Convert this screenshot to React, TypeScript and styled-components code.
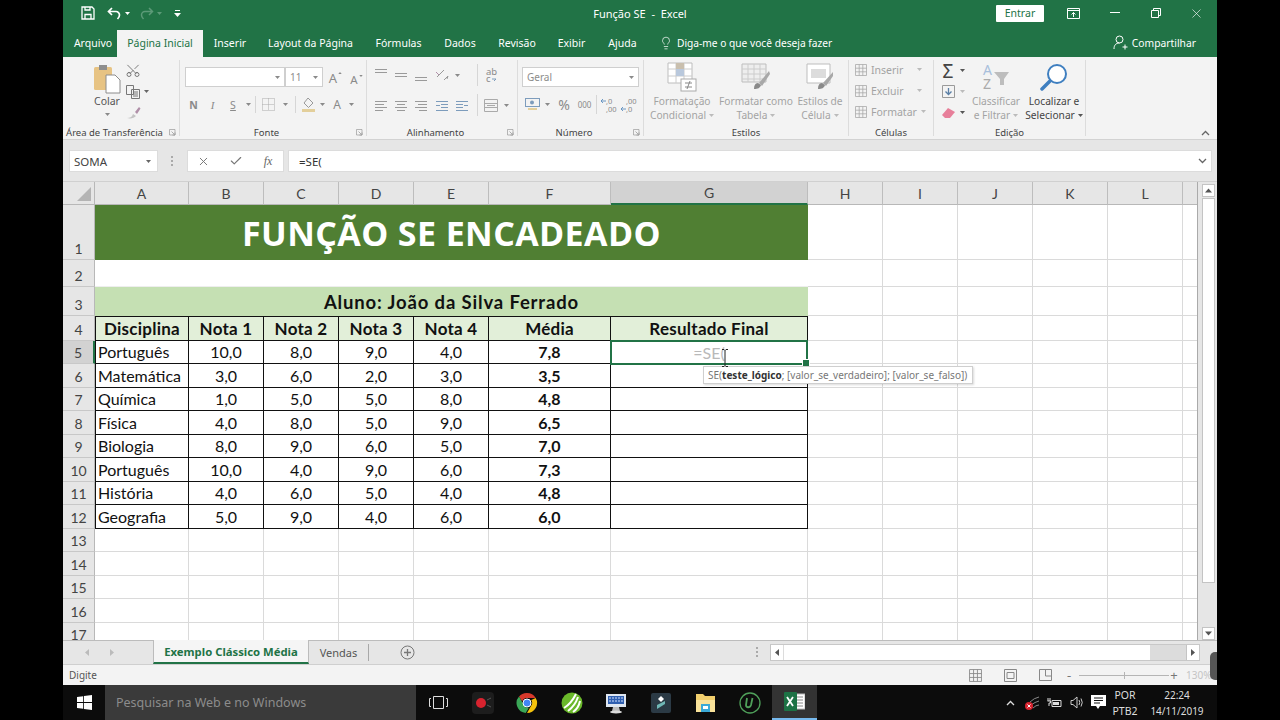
import React from 'react';
import styled, { createGlobalStyle } from 'styled-components';
import { Check, Lightbulb, Scissors, X } from 'lucide-react';

const Global = createGlobalStyle`
  html, body { margin: 0; padding: 0; background: #000; }
  * { box-sizing: border-box; }
`;

const UI = '"Noto Sans", "Open Sans", sans-serif';
const SHEET = 'Lato, "Noto Sans", sans-serif';
const GREEN = '#217346';
const DIM = '#a3a3a3';

const Page = styled.div`
  width: 1280px;
  height: 720px;
  padding: 0 63px;
  background: #000;
  overflow: hidden;
  font-family: ${UI};
`;
const Win = styled.div`
  width: 1154px;
  height: 720px;
  display: flex;
  flex-direction: column;
`;

/* title bar */
const TitleBar = styled.div`
  height: 29px;
  padding-bottom: 3px;
  background: ${GREEN};
  display: grid;
  grid-template-columns: 1fr auto 1fr;
  align-items: center;
  color: #fff;
  font-size: 11px;
`;
const Qat = styled.div`
  display: flex;
  align-items: center;
  padding-left: 18px;
`;
const Gap = styled.span<{ $w: number }>`
  width: ${(p) => p.$w}px;
  flex: none;
`;
const WinBtns = styled.div`
  display: flex;
  align-items: center;
  justify-content: flex-end;
`;
const Entrar = styled.div`
  width: 48px;
  height: 17px;
  margin-right: 9px;
  background: #fff;
  color: ${GREEN};
  border-radius: 1px;
  display: flex;
  align-items: center;
  justify-content: center;
  font-size: 10.5px;
`;
const WinBtn = styled.span`
  width: 41px;
  display: flex;
  justify-content: center;
`;

/* tabs */
const TabBar = styled.div`
  height: 28px;
  background: ${GREEN};
  display: flex;
  align-items: stretch;
  padding-left: 6px;
  padding-top: 1px;
  color: #fff;
  font-size: 10.5px;
`;
const Tab = styled.div<{ $active?: boolean; $w: number }>`
  width: ${(p) => p.$w}px;
  padding-bottom: 2px;
  display: flex;
  align-items: center;
  justify-content: center;
  flex: none;
  background: ${(p) => (p.$active ? '#f3f3f3' : 'transparent')};
  color: ${(p) => (p.$active ? GREEN : '#fff')};
`;
const Tell = styled.div`
  margin-left: 10px;
  padding-bottom: 2px;
  display: flex;
  align-items: center;
  gap: 4px;
  font-size: 10.2px;
`;
const Share = styled.div`
  margin-left: auto;
  padding: 0 21px 2px 0;
  display: flex;
  align-items: center;
  gap: 4px;
  font-size: 10.3px;
`;

/* ribbon */
const Ribbon = styled.div`
  height: 83px;
  background: #f3f3f3;
  border-bottom: 1px solid #d2d2d2;
  display: flex;
  padding-top: 3px;
  position: relative;
`;
const Group = styled.section<{ $w: number }>`
  width: ${(p) => p.$w}px;
  height: 76px;
  flex: none;
  border-right: 1px solid #dcdcdc;
  display: flex;
  flex-direction: column;
`;
const GroupBody = styled.div<{ $pad?: number }>`
  flex: 1;
  display: flex;
  min-height: 0;
  padding-left: ${(p) => p.$pad ?? 0}px;
`;
const GroupLabel = styled.div<{ $launch?: boolean }>`
  height: 14px;
  flex: none;
  margin-bottom: -3px;
  display: grid;
  grid-template-columns: ${(p) => (p.$launch ? '1fr auto 1fr 13px' : '1fr auto 1fr')};
  align-items: center;
  font-size: 9.5px;
  color: #444;
  white-space: nowrap;
`;
const Launcher = styled.span`
  justify-self: end;
  margin-right: 3px;
  display: flex;
`;
const Column = styled.div<{ $top?: number }>`
  margin-top: ${(p) => p.$top ?? 0}px;
  display: flex;
  flex-direction: column;
`;
const Row = styled.div<{ $h?: number; $gap?: number; $end?: boolean }>`
  height: ${(p) => p.$h ?? 21}px;
  margin-top: ${(p) => p.$gap ?? 0}px;
  display: flex;
  align-items: ${(p) => (p.$end ? 'flex-end' : 'center')};
  flex: none;
`;
const Slot = styled.span<{ $w: number; $c?: string; $size?: number; $bold?: boolean; $serif?: boolean; $under?: boolean }>`
  width: ${(p) => p.$w}px;
  flex: none;
  display: flex;
  justify-content: center;
  align-items: center;
  color: ${(p) => p.$c ?? '#8a8a8a'};
  font-size: ${(p) => p.$size ?? 11}px;
  font-weight: ${(p) => (p.$bold ? 700 : 400)};
  ${(p) => (p.$serif ? 'font-family: "Liberation Serif", serif; font-style: italic;' : '')}
  ${(p) => (p.$under ? 'text-decoration: underline;' : '')}
`;
const SupMark = styled.span`
  align-self: flex-start;
  margin: 3px 0 0 1px;
  display: flex;
`;
const Combo = styled.div<{ $w: number }>`
  width: ${(p) => p.$w}px;
  height: 20px;
  flex: none;
  background: #fff;
  border: 1px solid #cfcfcf;
  display: flex;
  align-items: center;
  justify-content: space-between;
  padding: 0 4px;
  font-size: 10px;
  color: #8c8c8c;
`;
const Divider = styled.span<{ $h?: number }>`
  width: 1px;
  height: ${(p) => p.$h ?? 17}px;
  background: #d6d6d6;
  flex: none;
`;
const PasteBtn = styled.div`
  width: 62px;
  flex: none;
  display: grid;
  align-content: start;
  justify-items: center;
  padding-left: 26px;
  font-size: 10.5px;
  line-height: 14px;
  color: #555;
`;
const PasteIcon = styled.div`
  height: 34px;
  display: flex;
  align-items: flex-end;
`;
const PasteTri = styled.span`
  display: flex;
  margin-top: 5px;
`;
const BigBtn = styled.div<{ $w: number; $c?: string; $ml?: number }>`
  width: ${(p) => p.$w}px;
  margin-left: ${(p) => p.$ml ?? 0}px;
  flex: none;
  display: flex;
  flex-direction: column;
  align-items: center;
  font-size: 10.2px;
  line-height: 14px;
  color: ${(p) => p.$c ?? DIM};
  white-space: nowrap;
`;
const BigLine = styled.span`
  display: flex;
  align-items: center;
  gap: 3px;
`;
const BigIcon = styled.div`
  height: 33px;
  display: flex;
  align-items: center;
  justify-content: center;
  margin-bottom: 1px;
`;
const CellBtn = styled.div`
  height: 21px;
  display: flex;
  align-items: center;
  gap: 4px;
  padding-left: 6px;
  color: ${DIM};
  font-size: 10.5px;
  white-space: nowrap;
`;
const CellText = styled.span<{ $w?: number }>`
  ${(p) => (p.$w ? `width: ${p.$w}px;` : '')}
`;
const Collapse = styled.span`
  position: absolute;
  right: 7px;
  bottom: 3px;
  display: flex;
`;

/* formula bar */
const FormulaBar = styled.div`
  height: 41px;
  padding: 1px 5px 0 6px;
  background: #e6e6e6;
  display: flex;
  align-items: center;
  font-size: 11.5px;
  color: #444;
`;
const NameBox = styled.div`
  width: 89px;
  height: 22px;
  background: #fff;
  display: flex;
  align-items: center;
  justify-content: space-between;
  padding: 0 6px 0 4px;
  border: 1px solid #dcdcdc;
`;
const Dots = styled.span`
  width: 29px;
  display: flex;
  justify-content: center;
`;
const FxBox = styled.div`
  width: 97px;
  height: 22px;
  background: #fff;
  border: 1px solid #dcdcdc;
  display: flex;
  align-items: center;
`;
const FormulaInput = styled.div`
  flex: 1;
  height: 22px;
  margin-left: 4px;
  background: #fff;
  border: 1px solid #dcdcdc;
  display: flex;
  align-items: center;
  justify-content: space-between;
  padding: 0 4px 0 10px;
  color: #333;
`;

/* sheet */
const SheetArea = styled.div`
  height: 459px;
  display: flex;
  background: #e6e6e6;
  border-top: 1px solid #d0d0d0;
`;
const Grid = styled.div`
  width: 1135px;
  height: 458px;
  overflow: hidden;
  flex: none;
  background: #fff;
  border-right: 1px solid #aaa;
  display: grid;
  grid-template-columns: 32px 94px 75px 75px 75px 75px 122px 197px 75px 75px 75px 75px 75px 15px;
  grid-template-rows: 23px 55px 27px 29px 24.5px repeat(13, 23.5px);
  font-family: ${SHEET};
`;
const Corner = styled.div`
  background: #e6e6e6;
  border-right: 1px solid #b8b8b8;
  border-bottom: 1px solid #b8b8b8;
  display: flex;
  align-items: flex-end;
  justify-content: flex-end;
  padding: 0 3px 3px 0;
`;
const ColHead = styled.div<{ $sel?: boolean }>`
  background: ${(p) => (p.$sel ? '#d2d2d2' : '#e6e6e6')};
  border-right: 1px solid #bdbdbd;
  border-bottom: ${(p) => (p.$sel ? `2px solid ${GREEN}` : '1px solid #b8b8b8')};
  display: flex;
  align-items: center;
  justify-content: center;
  font-size: 14px;
  color: #444;
`;
const RowHead = styled.div<{ $sel?: boolean }>`
  background: ${(p) => (p.$sel ? '#d2d2d2' : '#e6e6e6')};
  border-right: ${(p) => (p.$sel ? `2px solid ${GREEN}` : '1px solid #b8b8b8')};
  border-bottom: 1px solid #c8c8c8;
  display: flex;
  align-items: flex-end;
  justify-content: center;
  padding-bottom: 2px;
  font-size: 14px;
  color: #444;
`;
const Cell = styled.div`
  border-right: 1px solid #dadada;
  border-bottom: 1px solid #dadada;
`;
const Banner = styled.div`
  grid-column: 2 / 9;
  background: #507f33;
  color: #fff;
  font-family: "Open Sans", sans-serif;
  font-weight: 700;
  font-size: 34px;
  letter-spacing: 0.4px;
  display: flex;
  align-items: center;
  justify-content: center;
`;
const Blank = styled.div`
  grid-column: 2 / 9;
  border-bottom: 1px solid #eee;
`;
const Student = styled.div`
  grid-column: 2 / 9;
  background: #c5e0b3;
  color: #111;
  font-weight: 700;
  font-size: 18.5px;
  letter-spacing: 0.85px;
  display: flex;
  align-items: center;
  justify-content: center;
`;
const Box = styled.div<{ $left?: boolean; $head?: boolean; $bold?: boolean; $align?: string }>`
  background: ${(p) => (p.$head ? '#e2efd9' : '#fff')};
  border-right: 1px solid #111;
  border-bottom: 1px solid #111;
  ${(p) => (p.$left ? 'border-left: 1px solid #111;' : '')}
  ${(p) => (p.$head ? 'border-top: 1px solid #111; letter-spacing: 0.25px;' : '')}
  display: flex;
  align-items: center;
  justify-content: ${(p) => (p.$align === 'left' ? 'flex-start' : 'center')};
  padding-left: ${(p) => (p.$align === 'left' ? 2 : 0)}px;
  font-size: ${(p) => (p.$head ? 17 : 16)}px;
  font-weight: ${(p) => (p.$head || p.$bold ? 700 : 400)};
  color: #111;
  white-space: nowrap;
`;
const Active = styled.div`
  position: relative;
  z-index: 2;
  margin: -1px 0 -1px -1px;
  border: 2px solid ${GREEN};
  display: flex;
  align-items: center;
  justify-content: center;
  font-size: 16px;
  color: #b9b9b9;
  background: #fff;
  &::after {
    content: '';
    position: absolute;
    right: -4px;
    bottom: -4px;
    width: 6px;
    height: 6px;
    background: ${GREEN};
    border: 1px solid #fff;
  }
`;
const Tooltip = styled.div`
  position: absolute;
  left: 91px;
  top: 24px;
  height: 18px;
  width: 270px;
  padding-left: 4px;
  background: #fff;
  border: 1px solid #cfcfcf;
  box-shadow: 1px 1px 2px rgba(0, 0, 0, 0.15);
  font-family: ${UI};
  font-size: 10px;
  color: #777;
  display: flex;
  align-items: center;
  white-space: pre;
  z-index: 4;
  & b { color: #333; font-weight: 700; }
`;
const Caret = styled.span`
  position: absolute;
  left: 109px;
  top: 7px;
  display: flex;
  z-index: 5;
`;

const VScroll = styled.div`
  width: 19px;
  height: 458px;
  display: flex;
  flex-direction: column;
  align-items: flex-end;
  padding: 2px 2px 0 0;
`;
const ScrollBtn = styled.span<{ $end?: boolean }>`
  width: 13px;
  height: 13px;
  ${(p) => (p.$end ? 'margin-top: auto;' : '')}
  background: #fff;
  border: 1px solid #c4c4c4;
  display: flex;
  align-items: center;
  justify-content: center;
  flex: none;
`;
const VThumb = styled.span`
  width: 13px;
  height: 385px;
  margin-top: 1px;
  background: #fff;
  border: 1px solid #c4c4c4;
  flex: none;
`;

/* sheet tabs */
const SheetTabs = styled.div`
  height: 25px;
  background: #e6e6e6;
  border-top: 1px solid #bcbcbc;
  border-bottom: 1px solid #cfcfcf;
  display: flex;
  align-items: stretch;
  font-size: 11px;
  color: #555;
`;
const TabNav = styled.div`
  width: 90px;
  display: flex;
  align-items: center;
  padding-left: 22px;
  gap: 21px;
`;
const SheetTab = styled.div`
  width: 156px;
  margin-top: -1px;
  background: #f5f5f5;
  border-left: 1px solid #bcbcbc;
  border-right: 1px solid #bcbcbc;
  border-bottom: 2px solid ${GREEN};
  color: ${GREEN};
  font-weight: 700;
  font-size: 11.3px;
  display: flex;
  align-items: center;
  justify-content: center;
`;
const SheetTab2 = styled.div`
  width: 60px;
  border-right: 1px solid #a8a8a8;
  margin: 3px 0;
  display: flex;
  align-items: center;
  justify-content: center;
`;
const AddSheet = styled.div`
  width: 76px;
  display: flex;
  align-items: center;
  justify-content: center;
`;
const TabDots = styled.div`
  margin-left: auto;
  width: 26px;
  display: flex;
  align-items: center;
  justify-content: center;
`;
const HScroll = styled.div`
  width: 430px;
  display: flex;
  align-items: center;
  background: #dcdcdc;
  margin: 3px 17px 3px 0;
  border: 1px solid #c8c8c8;
  border-left: none;
`;
const HBtn = styled.span<{ $end?: boolean }>`
  width: 13px;
  height: 100%;
  background: #fff;
  border-left: 1px solid #c4c4c4;
  ${(p) => (p.$end ? 'margin-left: auto;' : '')}
  display: flex;
  align-items: center;
  justify-content: center;
`;
const HThumb = styled.span`
  width: 366px;
  height: 100%;
  margin-left: 1px;
  background: #fff;
`;

/* status */
const StatusBar = styled.div`
  height: 20px;
  background: #f3f3f3;
  display: flex;
  align-items: center;
  padding-left: 6px;
  font-size: 10px;
  color: #555;
  position: relative;
`;
const StatusRight = styled.div`
  margin-left: auto;
  display: flex;
  align-items: center;
`;
const ZoomTrack = styled.span`
  width: 90px;
  height: 1px;
  background: #b5b5b5;
  margin-left: 3px;
  display: flex;
  justify-content: center;
  align-items: center;
  &::after {
    content: '';
    width: 1px;
    height: 7px;
    background: #b5b5b5;
  }
`;
const ZoomPct = styled.span`
  width: 38px;
  padding-left: 7px;
  font-size: 10px;
  color: #c4c4c4;
`;
const Blob = styled.span`
  position: absolute;
  right: 0;
  top: -13px;
  width: 7px;
  height: 28px;
  background: #555;
  border-radius: 5px 0 0 5px;
`;

/* taskbar */
const Taskbar = styled.div`
  height: 35px;
  background: #0c0c0c;
  display: flex;
  align-items: stretch;
  color: #ddd;
`;
const Start = styled.div`
  width: 42px;
  display: flex;
  align-items: center;
  justify-content: center;
`;
const Search = styled.div`
  width: 311px;
  background: #3a3a3a;
  color: #8c8c8c;
  font-size: 12.5px;
  display: flex;
  align-items: center;
  padding-left: 11px;
`;
const TaskIcon = styled.div<{ $on?: boolean }>`
  width: 44.5px;
  display: flex;
  align-items: center;
  justify-content: center;
  ${(p) => (p.$on ? 'background: #333; border-bottom: 2px solid #76b9ed;' : '')}
`;
const Tray = styled.div`
  margin-left: auto;
  display: flex;
  align-items: center;
`;
const TraySlot = styled.span<{ $w: number }>`
  width: ${(p) => p.$w}px;
  display: flex;
  justify-content: center;
  align-items: center;
`;
const Lang = styled.div`
  width: 36px;
  text-align: center;
  font-size: 10.5px;
  line-height: 16px;
`;
const Clock = styled.div`
  width: 68px;
  margin-right: 6px;
  text-align: center;
  font-size: 10px;
  line-height: 16px;
`;

const Tri = ({ c = '#8a8a8a', s = 5 }: { c?: string; s?: number }) => (
  <svg width={s} height={s - 2} viewBox="0 0 5 3"><path d="M0 0h5L2.5 3z" fill={c} /></svg>
);
const UpTri = ({ c = '#8a8a8a', s = 5 }: { c?: string; s?: number }) => (
  <svg width={s} height={s - 2} viewBox="0 0 5 3"><path d="M0 3h5L2.5 0z" fill={c} /></svg>
);
const Chevron = ({ d = 'down', c = '#666' }: { d?: 'down' | 'up'; c?: string }) => (
  <svg width="9" height="6" viewBox="0 0 9 6">
    <path d={d === 'down' ? 'M1 1l3.5 3.5L8 1' : 'M1 5l3.500-3.500L8 5'} fill="none" stroke={c} strokeWidth="1.3" />
  </svg>
);
const Corner5 = () => (
  <svg width="7" height="7" viewBox="0 0 7 7" fill="none" stroke="#999">
    <path d="M.5 .5h5.500v5.500H.5z" strokeWidth=".7" />
    <path d="M2.500 2.500l3 3M6 3.500V6H3.500" strokeWidth=".8" />
  </svg>
);
const Lines = ({ rows, c = '#9a9a9a' }: { rows: [number, number, number][]; c?: string }) => (
  <svg width="14" height="14" viewBox="0 0 14 14">
    {rows.map(([x, y, w], i) => <rect key={i} x={x} y={y} width={w} height="1" fill={c} />)}
  </svg>
);
const Sheetlet = ({ w = 12, c = '#aaa' }: { w?: number; c?: string }) => (
  <svg width={w} height={w} viewBox="0 0 12 12" fill="none" stroke={c} strokeWidth=".8">
    <path d="M.5 .5h11v11H.5zM.5 4.200h11M.5 7.800h11M4.200 .5v11M7.800 .5v11" />
  </svg>
);
const Grip = () => (
  <svg width="3" height="13" viewBox="0 0 3 13" fill="#aaa">
    <rect y="1" width="2" height="2" /><rect y="5" width="2" height="2" /><rect y="9" width="2" height="2" />
  </svg>
);
const Decimals = ({ top, bottom, low }: { top: string; bottom: string; low?: boolean }) => (
  <svg width="19" height="16" viewBox="0 0 19 16" overflow="visible" fontFamily="Noto Sans" fontSize="7.5" fill="#8a8a8a">
    <text x="6" y="7">{top}</text>
    <text x="6" y="15">{bottom}</text>
    <path d="M1 4h5M1 4l2-2M1 4l2 2" stroke="#5f8fbe" fill="none" strokeWidth=".9" transform={low ? 'translate(0 8)' : undefined} />
  </svg>
);

const columns = ['A', 'B', 'C', 'D', 'E', 'F', 'G', 'H', 'I', 'J', 'K', 'L', ''];
const headers = ['Disciplina', 'Nota 1', 'Nota 2', 'Nota 3', 'Nota 4', 'Média', 'Resultado Final'];
const grades = [
  ['Português', '10,0', '8,0', '9,0', '4,0', '7,8'],
  ['Matemática', '3,0', '6,0', '2,0', '3,0', '3,5'],
  ['Química', '1,0', '5,0', '5,0', '8,0', '4,8'],
  ['Física', '4,0', '8,0', '5,0', '9,0', '6,5'],
  ['Biologia', '8,0', '9,0', '6,0', '5,0', '7,0'],
  ['Português', '10,0', '4,0', '9,0', '6,0', '7,3'],
  ['História', '4,0', '6,0', '5,0', '4,0', '4,8'],
  ['Geografia', '5,0', '9,0', '4,0', '6,0', '6,0'],
];

const emptyRight = (row: number) => [0, 1, 2, 3, 4, 5].map((i) => <Cell key={`${row}-${i}`} />);

function Sheet() {
  return (
    <Grid>
      <Corner>
        <svg width="14" height="14" viewBox="0 0 14 14"><path d="M14 0v14H0z" fill="#b4b4b4" /></svg>
      </Corner>
      {columns.map((c, i) => <ColHead key={i} $sel={c === 'G'}>{c}</ColHead>)}

      <RowHead>1</RowHead>
      <Banner>FUNÇÃO SE ENCADEADO</Banner>
      {emptyRight(1)}
      <RowHead>2</RowHead>
      <Blank />
      {emptyRight(2)}
      <RowHead>3</RowHead>
      <Student>Aluno: João da Silva Ferrado</Student>
      {emptyRight(3)}

      <RowHead>4</RowHead>
      {headers.map((h, i) => <Box key={h} $head $left={i === 0}>{h}</Box>)}
      {emptyRight(4)}

      {grades.map((g, r) => (
        <React.Fragment key={r}>
          <RowHead $sel={r === 0}>{r + 5}</RowHead>
          {g.map((v, i) => (
            <Box key={i} $left={i === 0} $align={i === 0 ? 'left' : undefined} $bold={i === 5}>{v}</Box>
          ))}
          {r === 0 ? (
            <Active>
              =SE(
              <Tooltip>SE(<b>teste_lógico</b>; [valor_se_verdadeiro]; [valor_se_falso])</Tooltip>
              <Caret>
                <svg width="8" height="18" viewBox="0 0 8 18" fill="none" stroke="#222" strokeWidth="1">
                  <path d="M1 .5h2l1 1 1-1h2M4 1.500v15M1 17.500h2l1-1 1 1h2" />
                </svg>
              </Caret>
            </Active>
          ) : <Box />}
          {emptyRight(r + 5)}
        </React.Fragment>
      ))}

      {[13, 14, 15, 16, 17].map((n) => (
        <React.Fragment key={n}>
          <RowHead>{n}</RowHead>
          {[0, 1, 2, 3, 4, 5, 6].map((i) => <Cell key={i} />)}
          {emptyRight(n)}
        </React.Fragment>
      ))}
    </Grid>
  );
}

export default function App() {
  return (
    <Page>
      <Global />
      <Win>
        <TitleBar>
          <Qat>
            <svg width="14" height="14" viewBox="0 0 14 14" fill="none" stroke="#fff" strokeWidth="1.3">
              <path d="M1 1h10l2 2v10H1zM4 13V8.500h6V13M4 1v3h5V1" />
            </svg>
            <Gap $w={12} />
            <svg width="16" height="13" viewBox="0 0 16 13" fill="none" stroke="#fff" strokeWidth="1.7">
              <path d="M5 1L1.500 4.500 5 8M2 4.500h7a3.500 3.500 0 0 1 3.500 3.500c0 2-1 3-2 4" />
            </svg>
            <Gap $w={2} />
            <Tri c="#fff" />
            <Gap $w={9} />
            <svg width="15" height="13" viewBox="0 0 15 13" fill="none" stroke="#5c9a78" strokeWidth="1.5">
              <path d="M10 1l3.500 3.500L10 8M13 4.500H6A3.500 3.500 0 0 0 2.500 8c0 2 1 3 2 4" />
            </svg>
            <Gap $w={3} />
            <Tri c="#5c9a78" />
            <Gap $w={12} />
            <svg width="7" height="7" viewBox="0 0 7 7" fill="#fff"><path d="M1 0h5v1H1zM0 3h7L3.500 7z" /></svg>
          </Qat>
          <span>Função SE&nbsp; -&nbsp; Excel</span>
          <WinBtns>
            <Entrar>Entrar</Entrar>
            <WinBtn>
              <svg width="13" height="11" viewBox="0 0 13 11" fill="none" stroke="#fff">
                <path d="M.5 .5h12v10H.5zM.5 2.500h12M6.500 9V4.500M4.500 6.500l2-2 2 2" />
              </svg>
            </WinBtn>
            <WinBtn>
              <svg width="10" height="2" viewBox="0 0 10 2"><path d="M0 .5h10" stroke="#fff" /></svg>
            </WinBtn>
            <WinBtn>
              <svg width="10" height="10" viewBox="0 0 10 10" fill="none" stroke="#fff">
                <path d="M.5 2.500h7v7h-7zM2.500 2.500v-2h7v7h-2" />
              </svg>
            </WinBtn>
            <WinBtn>
              <X size={15} strokeWidth={1} color="#fff" />
            </WinBtn>
          </WinBtns>
        </TitleBar>

        <TabBar>
          <Tab $w={48}>Arquivo</Tab>
          <Tab $w={86} $active>Página Inicial</Tab>
          <Tab $w={54}>Inserir</Tab>
          <Tab $w={107}>Layout da Página</Tab>
          <Tab $w={69}>Fórmulas</Tab>
          <Tab $w={54}>Dados</Tab>
          <Tab $w={60}>Revisão</Tab>
          <Tab $w={49}>Exibir</Tab>
          <Tab $w={53}>Ajuda</Tab>
          <Tell>
            <Lightbulb size={14} strokeWidth={1.2} color="#fff" />
            Diga-me o que você deseja fazer
          </Tell>
          <Share>
            <svg width="15" height="15" viewBox="0 0 15 15" fill="none" stroke="#fff" strokeWidth="1">
              <circle cx="6.500" cy="4.500" r="3.500" />
              <path d="M1 14c0-4 2-6 5.500-6M9.500 12h5M12 9.500v5" />
            </svg>
            Compartilhar
          </Share>
        </TabBar>

        <Ribbon>
          <Group $w={117}>
            <GroupBody>
              <PasteBtn>
                <PasteIcon>
                  <svg width="28" height="30" viewBox="0 0 28 30">
                    <rect x="1" y="3" width="18" height="23" rx="1.500" fill="#e7c383" />
                    <rect x="6" y="1" width="8" height="5" fill="#8e8e8e" />
                    <path d="M13 11h9l5 5v13H13z" fill="#fff" stroke="#8c8c8c" />
                  </svg>
                </PasteIcon>
                <span>Colar</span>
                <PasteTri><Tri /></PasteTri>
              </PasteBtn>
              <Column>
                <Row $h={21}><Slot $w={16}><Scissors size={17} strokeWidth={1.2} color="#5e5e5e" style={{ transform: 'rotate(-90deg)' }} /></Slot></Row>
                <Row $h={21}>
                  <Slot $w={16}>
                    <svg width="14" height="14" viewBox="0 0 14 14" fill="none" stroke="#777">
                      <path d="M.5 .5h7v9h-7zM5.500 4.500h8v9h-8zM7 7h5M7 9h5M7 11h5" />
                    </svg>
                  </Slot>
                  <Slot $w={10}><Tri c="#666" /></Slot>
                </Row>
                <Row $h={21}>
                  <Slot $w={16}>
                    <svg width="15" height="13" viewBox="0 0 15 13">
                      <path d="M1 12c3 0 5-1 6-4l3 2c-2 2-5 3-9 2z" fill="#c4c4c4" />
                      <path d="M9 6l4-5 1.500 1.500L11 8z" fill="#b08fa8" />
                    </svg>
                  </Slot>
                </Row>
              </Column>
            </GroupBody>
            <GroupLabel $launch><span /><span>Área de Transferência</span><span /><Launcher><Corner5 /></Launcher></GroupLabel>
          </Group>

          <Group $w={187}>
            <GroupBody $pad={5}>
              <Column>
                <Row $h={27} $end>
                  <Combo $w={100}><span /><Tri /></Combo>
                  <Combo $w={38}>11<Tri /></Combo>
                  <Slot $w={2} />
                  <Slot $w={21} $size={13}>A<SupMark><UpTri s={4} /></SupMark></Slot>
                  <Slot $w={21} $size={11.5}>A<SupMark><Tri s={4} /></SupMark></Slot>
                </Row>
                <Row $h={27} $gap={4}>
                  <Slot $w={17} $bold $size={10.5}>N</Slot>
                  <Slot $w={21} $serif $size={11}>I</Slot>
                  <Slot $w={20} $size={10.5} $under>S</Slot>
                  <Slot $w={10}><Tri /></Slot>
                  <Slot $w={5}><Divider /></Slot>
                  <Slot $w={21}>
                    <svg width="13" height="13" viewBox="0 0 13 13" fill="none" stroke="#aaa" strokeDasharray="1 1"><path d="M.5 .5h12v12H.5zM.5 6.500h12M6.500 .5v12" /></svg>
                  </Slot>
                  <Slot $w={12}><Tri /></Slot>
                  <Slot $w={8}><Divider /></Slot>
                  <Slot $w={19}>
                    <svg width="15" height="15" viewBox="0 0 15 15">
                      <path d="M7 1l5 5-4.500 4.500L3 6z" fill="none" stroke="#999" />
                      <rect x="1" y="12" width="13" height="3" fill="#e3cf9b" />
                    </svg>
                  </Slot>
                  <Slot $w={9}><Tri /></Slot>
                  <Slot $w={20} $size={12}>A</Slot>
                  <Slot $w={9}><Tri /></Slot>
                </Row>
              </Column>
            </GroupBody>
            <GroupLabel $launch><span /><span>Fonte</span><span /><Launcher><Corner5 /></Launcher></GroupLabel>
          </Group>

          <Group $w={151}>
            <GroupBody $pad={4}>
              <Column>
                <Row $h={30}>
                  <Slot $w={20}><Lines rows={[[1, 1, 12], [1, 4, 12]]} /></Slot>
                  <Slot $w={20}><Lines rows={[[1, 5, 12], [1, 8, 12]]} /></Slot>
                  <Slot $w={20}><Lines rows={[[1, 9, 12], [1, 12, 12]]} /></Slot>
                  <Slot $w={21}>
                    <svg width="14" height="14" viewBox="0 0 14 14" fill="none" stroke="#999">
                      <path d="M2 9l7-7M9 12l4-4-1 3" />
                      <path d="M1 4l3 3" stroke="#b08fa8" />
                    </svg>
                  </Slot>
                  <Slot $w={10}><Tri /></Slot>
                  <Gap $w={15} />
                  <Divider $h={22} />
                  <Slot $w={26}>
                    <svg width="13" height="16" viewBox="0 0 13 16" overflow="visible" fontFamily="Noto Sans" fontSize="9.5" fill="#8a8a8a">
                      <text x="1" y="8">ab</text>
                      <text x="1" y="15">c</text>
                      <path d="M7 12h4l-2 2" stroke="#7d9cbc" fill="none" />
                    </svg>
                  </Slot>
                </Row>
                <Row $h={30}>
                  <Slot $w={20}><Lines rows={[[1, 3, 12], [1, 6, 9], [1, 9, 12], [1, 12, 8]]} /></Slot>
                  <Slot $w={20}><Lines rows={[[1, 3, 12], [3, 6, 8], [1, 9, 12], [3, 12, 8]]} /></Slot>
                  <Slot $w={20}><Lines rows={[[1, 3, 12], [4, 6, 9], [1, 9, 12], [5, 12, 8]]} /></Slot>
                  <Slot $w={21}><Lines rows={[[1, 3, 12], [6, 6, 7], [1, 7, 4], [6, 9, 7], [1, 12, 12]]} c="#7d9cbc" /></Slot>
                  <Slot $w={19}><Lines rows={[[1, 3, 12], [1, 6, 7], [9, 7, 4], [1, 9, 7], [1, 12, 12]]} c="#7d9cbc" /></Slot>
                  <Gap $w={6} />
                  <Divider $h={22} />
                  <Gap $w={4} />
                  <Slot $w={17}>
                    <svg width="14" height="13" viewBox="0 0 14 13" fill="none" stroke="#aaa"><path d="M.5 .5h13v12H.5zM.5 4.500h13M.5 8.500h13M3 6.500h8" /></svg>
                  </Slot>
                  <Slot $w={14}><Tri /></Slot>
                </Row>
              </Column>
            </GroupBody>
            <GroupLabel $launch><span /><span>Alinhamento</span><span /><Launcher><Corner5 /></Launcher></GroupLabel>
          </Group>

          <Group $w={126}>
            <GroupBody $pad={4}>
              <Column>
                <Row $h={27} $end>
                  <Combo $w={117}>Geral<Tri /></Combo>
                </Row>
                <Row $h={27} $gap={4}>
                  <Slot $w={21}>
                    <svg width="15" height="13" viewBox="0 0 15 13">
                      <rect x=".5" y=".5" width="14" height="8" fill="none" stroke="#7d9cbc" />
                      <circle cx="7" cy="4.500" r="2" fill="#7d9cbc" />
                      <path d="M3 10h9v2H3z" fill="#e3cf9b" />
                    </svg>
                  </Slot>
                  <Slot $w={9}><Tri /></Slot>
                  <Slot $w={24} $size={14}>%</Slot>
                  <Slot $w={17} $size={8}>000</Slot>
                  <Slot $w={6}><Divider $h={19} /></Slot>
                  <Slot $w={20}><Decimals top=",0" bottom=",00" /></Slot>
                  <Slot $w={21}><Decimals top=",00" bottom=",0" low /></Slot>
                </Row>
              </Column>
            </GroupBody>
            <GroupLabel $launch><span /><span>Número</span><span /><Launcher><Corner5 /></Launcher></GroupLabel>
          </Group>

          <Group $w={205}>
            <GroupBody $pad={3}>
              <BigBtn $w={70}>
                <BigIcon>
                  <svg width="30" height="30" viewBox="0 0 30 30">
                    <path d="M1 1h24v20H1z" fill="#fff" stroke="#bdbdbd" />
                    <path d="M9 1v20M17 1v20M1 7h24M1 14h24" stroke="#ccc" fill="none" />
                    <rect x="9" y="7" width="8" height="7" fill="#b9c8dc" />
                    <rect x="9" y="1" width="8" height="6" fill="#c9bfae" />
                    <rect x="14" y="17" width="15" height="12" fill="#fff" stroke="#aaa" />
                    <path d="M18 21h7M18 25h7M23 19l-3 8" stroke="#888" />
                  </svg>
                </BigIcon>
                <span>Formatação</span>
                <BigLine>Condicional <Tri c="#bbb" /></BigLine>
              </BigBtn>
              <BigBtn $w={78}>
                <BigIcon>
                  <svg width="30" height="28" viewBox="0 0 30 28">
                    <path d="M1 1h24v18H1z" fill="#eee" stroke="#bdbdbd" />
                    <path d="M7 1v18M13 1v18M19 1v18M1 6h24M1 11h24M1 16h24" stroke="#ccc" />
                    <path d="M28 8L18 20l3 3 8-12z" fill="#a8a8a8" />
                    <path d="M13 26c4 0 6-1 7-4l-3-2c-3 0-4 3-4 6z" fill="#8a8a8a" />
                  </svg>
                </BigIcon>
                <span>Formatar como</span>
                <BigLine>Tabela <Tri c="#bbb" /></BigLine>
              </BigBtn>
              <BigBtn $w={50}>
                <BigIcon>
                  <svg width="28" height="28" viewBox="0 0 28 28">
                    <path d="M1 1h23v19H1z" fill="#fff" stroke="#bdbdbd" />
                    <rect x="5" y="6" width="15" height="9" fill="#dcdcdc" />
                    <path d="M27 9L17 20l3 3 7-10z" fill="#a8a8a8" />
                    <path d="M12 26c4 0 6-1 7-4l-3-2c-3 0-4 3-4 6z" fill="#8a8a8a" />
                  </svg>
                </BigIcon>
                <span>Estilos de</span>
                <BigLine>Célula <Tri c="#bbb" /></BigLine>
              </BigBtn>
            </GroupBody>
            <GroupLabel><span /><span>Estilos</span><span /></GroupLabel>
          </Group>

          <Group $w={85}>
            <GroupBody>
              <Column $top={-1}>
                <CellBtn><Sheetlet /><CellText $w={42}>Inserir</CellText><Tri c="#bbb" /></CellBtn>
                <CellBtn><Sheetlet /><CellText $w={42}>Excluir</CellText><Tri c="#bbb" /></CellBtn>
                <CellBtn><Sheetlet /><CellText>Formatar</CellText><Tri c="#bbb" /></CellBtn>
              </Column>
            </GroupBody>
            <GroupLabel><span /><span>Células</span><span /></GroupLabel>
          </Group>

          <Group $w={152}>
            <GroupBody $pad={5}>
              <Column>
                <Row $h={21}>
                  <Slot $w={18} $c="#444" $size={19}>Σ</Slot>
                  <Slot $w={11}><Tri c="#555" /></Slot>
                </Row>
                <Row $h={21}>
                  <Slot $w={18}>
                    <svg width="13" height="13" viewBox="0 0 13 13" fill="none" stroke="#9a9a9a">
                      <path d="M.5 .5h12v12H.5z" />
                      <path d="M6.500 3v6M3.500 6.500l3 3 3-3" stroke="#5a7fa6" strokeWidth="1.3" />
                    </svg>
                  </Slot>
                  <Slot $w={11}><Tri c="#bbb" /></Slot>
                </Row>
                <Row $h={21}>
                  <Slot $w={18}>
                    <svg width="15" height="12" viewBox="0 0 15 12">
                      <path d="M1 8l6-7 7 4-5 6H4z" fill="#e77f9a" />
                    </svg>
                  </Slot>
                  <Slot $w={11}><Tri c="#555" /></Slot>
                </Row>
              </Column>
              <BigBtn $w={50} $ml={3}>
                <BigIcon>
                  <svg width="28" height="28" viewBox="0 0 28 28" overflow="visible" fontFamily="Noto Sans" fontSize="14">
                    <text x="1" y="12" fill="#a8bfdc">A</text>
                    <text x="1" y="26" fill="#aaa">Z</text>
                    <path d="M12 9h15l-5 7v6h-4v-6z" fill="#bdbdbd" />
                  </svg>
                </BigIcon>
                <span>Classificar</span>
                <BigLine>e Filtrar <Tri c="#bbb" /></BigLine>
              </BigBtn>
              <BigBtn $w={62} $c="#444" $ml={2}>
                <BigIcon>
                  <svg width="28" height="28" viewBox="0 0 28 28" fill="none">
                    <circle cx="17" cy="11" r="9" stroke="#3f7fc0" strokeWidth="2" fill="#fff" />
                    <path d="M10 18l-8 8" stroke="#3f7fc0" strokeWidth="3.5" strokeLinecap="round" />
                  </svg>
                </BigIcon>
                <span>Localizar e</span>
                <BigLine>Selecionar <Tri c="#555" /></BigLine>
              </BigBtn>
            </GroupBody>
            <GroupLabel><span /><span>Edição</span><span /></GroupLabel>
          </Group>
          <Collapse><Chevron d="up" /></Collapse>
        </Ribbon>

        <FormulaBar>
          <NameBox>SOMA<Tri c="#666" /></NameBox>
          <Dots><Grip /></Dots>
          <FxBox>
            <Slot $w={30}><X size={13} color="#777" strokeWidth={1.8} /></Slot>
            <Slot $w={35}><Check size={14} color="#777" strokeWidth={2} /></Slot>
            <Slot $w={30} $serif $c="#666" $size={12}>fx</Slot>
          </FxBox>
          <FormulaInput>=SE(<Chevron /></FormulaInput>
        </FormulaBar>

        <SheetArea>
          <Sheet />
          <VScroll>
            <ScrollBtn><UpTri c="#555" s={7} /></ScrollBtn>
            <VThumb />
            <ScrollBtn $end><Tri c="#555" s={7} /></ScrollBtn>
          </VScroll>
        </SheetArea>

        <SheetTabs>
          <TabNav>
            <svg width="4" height="7" viewBox="0 0 4 7"><path d="M4 0v7L0 3.500z" fill="#bbb" /></svg>
            <svg width="4" height="7" viewBox="0 0 4 7"><path d="M0 0v7l4-3.500z" fill="#bbb" /></svg>
          </TabNav>
          <SheetTab>Exemplo Clássico Média</SheetTab>
          <SheetTab2>Vendas</SheetTab2>
          <AddSheet>
            <svg width="15" height="15" viewBox="0 0 15 15" fill="none" stroke="#777">
              <circle cx="7.500" cy="7.500" r="6.500" />
              <path d="M7.500 4v7M4 7.500h7" strokeWidth="1.3" />
            </svg>
          </AddSheet>
          <TabDots><Grip /></TabDots>
          <HScroll>
            <HBtn><svg width="4" height="7" viewBox="0 0 4 7"><path d="M4 0v7L0 3.500z" fill="#555" /></svg></HBtn>
            <HThumb />
            <HBtn $end><svg width="4" height="7" viewBox="0 0 4 7"><path d="M0 0v7l4-3.500z" fill="#555" /></svg></HBtn>
          </HScroll>
        </SheetTabs>

        <StatusBar>
          Digite
          <StatusRight>
            <Slot $w={35}><Sheetlet w={13} c="#888" /></Slot>
            <Slot $w={35}>
              <svg width="13" height="13" viewBox="0 0 13 13" fill="none" stroke="#888"><path d="M.5 .5h12v12H.5zM3 3.500h7v6H3z" /></svg>
            </Slot>
            <Slot $w={34}>
              <svg width="13" height="12" viewBox="0 0 13 12" fill="none" stroke="#888"><path d="M.5 .5h12v11H.5zM6.500 .5V7h6" /></svg>
            </Slot>
            <Slot $w={14} $c="#777" $size={13}>-</Slot>
            <ZoomTrack />
            <Slot $w={10} $c="#777" $size={13}>+</Slot>
            <ZoomPct>130%</ZoomPct>
          </StatusRight>
          <Blob />
        </StatusBar>

        <Taskbar>
          <Start>
            <svg width="15" height="15" viewBox="0 0 15 15" fill="#fff">
              <path d="M0 2.100L6.200 1.200V7H0zM7 1.100L15 0v7H7zM0 8h6.200v5.800L0 12.900zM7 8h8v7l-8-1.100z" />
            </svg>
          </Start>
          <Search>Pesquisar na Web e no Windows</Search>
          <TaskIcon>
            <svg width="19" height="13" viewBox="0 0 19 13" fill="none" stroke="#ddd">
              <path d="M4.500 .5h10v12h-10zM2 2.500H.5v8H2M17 2.500h1.500v8H17" />
            </svg>
          </TaskIcon>
          <TaskIcon>
            <svg width="24" height="24" viewBox="0 0 24 24">
              <rect x="1" y="1" width="22" height="22" rx="4" fill="#1d1d1d" />
              <circle cx="10" cy="12" r="5" fill="#d8232f" />
              <path d="M16 9l4-2M16 14l4 2" stroke="#555" />
            </svg>
          </TaskIcon>
          <TaskIcon>
            <svg width="22" height="22" viewBox="0 0 22 22">
              <path d="M11 1a10 10 0 0 1 8.700 5H11a5 5 0 0 0-4.800 3.500L3 4.500A10 10 0 0 1 11 1z" fill="#d8392b" />
              <path d="M19.700 6A10 10 0 0 1 11 21l4.300-7.500A5 5 0 0 0 15.300 8z" fill="#f4c20d" />
              <path d="M3 4.500l4.300 7.500a5 5 0 0 0 5.700 3.600L9.700 21A10 10 0 0 1 3 4.500z" fill="#3aa757" />
              <circle cx="11" cy="11" r="4" fill="#4285f4" stroke="#fff" />
            </svg>
          </TaskIcon>
          <TaskIcon>
            <svg width="22" height="22" viewBox="0 0 22 22">
              <circle cx="11" cy="11" r="10.500" fill="#6ab82a" />
              <path d="M3 16C8 13 12 8 15 2M7 19c4-3 8-8 10-14M12 20c3-2 6-6 7-11" stroke="#fff" strokeWidth="2" fill="none" />
            </svg>
          </TaskIcon>
          <TaskIcon>
            <svg width="22" height="22" viewBox="0 0 22 22">
              <rect x="1" y="2" width="20" height="13" fill="#dfe6f0" />
              <rect x="3" y="4" width="16" height="8" fill="#2f5fb0" />
              <path d="M4 6h14M4 9h14" stroke="#cfe0ff" strokeDasharray="2 1" />
              <path d="M8 15h6l1 4H7z" fill="#bbb" />
              <ellipse cx="11" cy="20" rx="6" ry="1.500" fill="#ddd" />
            </svg>
          </TaskIcon>
          <TaskIcon>
            <svg width="20" height="20" viewBox="0 0 20 20">
              <rect width="20" height="20" rx="2" fill="#2b3a45" />
              <path d="M10 3l3 3-3 3-3-3z" fill="#fff" />
              <path d="M6 12l8-4v3l-8 5z" fill="#6fb7b5" />
            </svg>
          </TaskIcon>
          <TaskIcon>
            <svg width="21" height="18" viewBox="0 0 21 18">
              <path d="M1 0h7l2 2h10v16H1z" fill="#f2cf6d" />
              <rect x="1" y="6" width="19" height="12" fill="#f9e29a" />
              <rect x="6" y="10" width="9" height="8" fill="#3ba9d6" />
              <rect x="8" y="12" width="5" height="3" fill="#fff" />
            </svg>
          </TaskIcon>
          <TaskIcon>
            <svg width="22" height="22" viewBox="0 0 22 22" fill="none" stroke="#4fa05a" strokeWidth="1.3">
              <circle cx="11" cy="11" r="10" />
              <path d="M8 6l-1 7c0 3 4 3 5 0l1.500-7" strokeWidth="1.8" />
            </svg>
          </TaskIcon>
          <TaskIcon $on>
            <svg width="21" height="19" viewBox="0 0 21 19">
              <rect x="9" y="2" width="12" height="15" fill="#fff" stroke="#bbb" />
              <path d="M12 5h7M12 8h7M12 11h7M12 14h7" stroke="#888" />
              <rect x="0" y="0" width="13" height="19" rx="1" fill="#1d7245" />
              <path d="M3 5l6 9M9 5l-6 9" stroke="#fff" strokeWidth="1.8" />
            </svg>
          </TaskIcon>
          <Tray>
            <TraySlot $w={22}><Chevron d="up" c="#ddd" /></TraySlot>
            <TraySlot $w={22}>
              <svg width="16" height="14" viewBox="0 0 16 14" fill="none">
                <path d="M6 6q4-4 9-5M7 9q4-3 8-4M9 12q3-3 6-3" stroke="#888" />
                <circle cx="5" cy="10" r="4" fill="#d8232f" />
                <path d="M3.500 8.500l3 3M6.500 8.500l-3 3" stroke="#fff" />
              </svg>
            </TraySlot>
            <TraySlot $w={22}>
              <svg width="15" height="12" viewBox="0 0 15 12" fill="none" stroke="#ddd">
                <path d="M5 3.500h9v6H5z" /><rect x="6" y="5" width="6" height="3" fill="#ddd" stroke="none" />
                <path d="M1 1v3M3 1v3M0.500 4h3v2H2v3" />
              </svg>
            </TraySlot>
            <TraySlot $w={24}>
              <svg width="15" height="13" viewBox="0 0 15 13" fill="none" stroke="#ccc">
                <path d="M1 4.500h2L7 1v11L3 8.500H1zM9 4q1.500 2.500 0 5M11 2.500q2.500 4 0 8" />
              </svg>
            </TraySlot>
            <TraySlot $w={18}>
              <svg width="15" height="15" viewBox="0 0 15 15">
                <path d="M0 0h15v11H9l-2 3-2-3H0z" fill="#fff" />
                <path d="M3 3h9M3 5.500h9M3 8h6" stroke="#111" />
              </svg>
            </TraySlot>
            <Lang>POR<br />PTB2</Lang>
            <Clock>22:24<br />14/11/2019</Clock>
          </Tray>
        </Taskbar>
      </Win>
    </Page>
  );
}
